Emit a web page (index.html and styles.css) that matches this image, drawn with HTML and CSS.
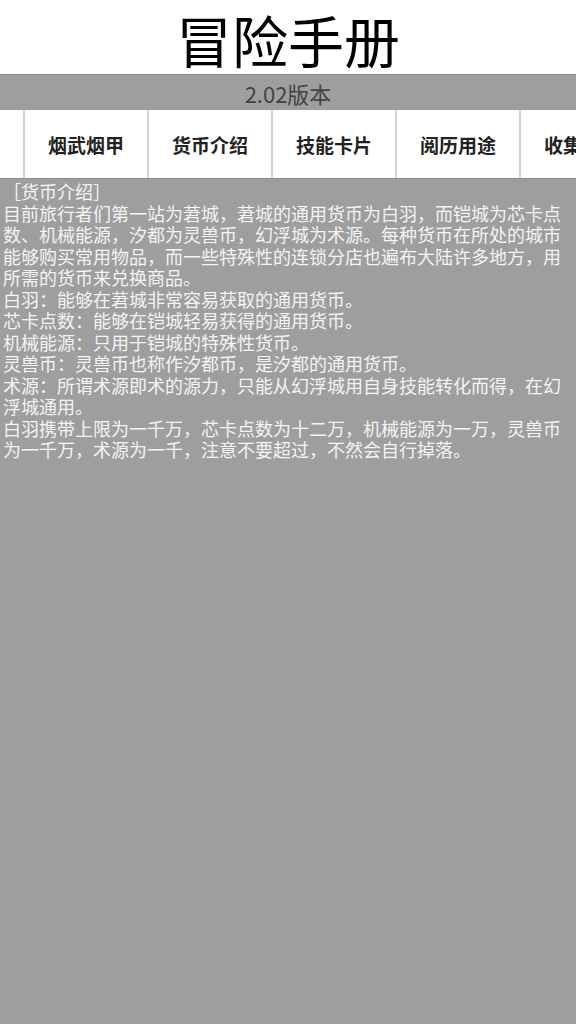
FILE: index.html
```html
<!DOCTYPE html>
<html lang="zh-CN">
<head>
<meta charset="utf-8">
<title>冒险手册</title>
<link rel="stylesheet" href="styles.css">
</head>
<body>
<div class="page">
  <header class="header">
    <h1 class="title">冒险手册</h1>
  </header>
  <div class="version">2.02版本</div>
  <nav class="tabs">
    <div class="tab-track">
      <div class="tab">人物介绍</div>
      <div class="tab">烟武烟甲</div>
      <div class="tab">货币介绍</div>
      <div class="tab">技能卡片</div>
      <div class="tab">阅历用途</div>
      <div class="tab">收集图鉴</div>
    </div>
  </nav>
  <main class="content">
    <p class="para">［货币介绍］</p>
    <p class="para">目前旅行者们第一站为莙城，莙城的通用货币为白羽，而铠城为芯卡点数、机械能源，汐都为灵兽币，幻浮城为术源。每种货币在所处的城市能够购买常用物品，而一些特殊性的连锁分店也遍布大陆许多地方，用所需的货币来兑换商品。</p>
    <p class="para">白羽：能够在莙城非常容易获取的通用货币。</p>
    <p class="para">芯卡点数：能够在铠城轻易获得的通用货币。</p>
    <p class="para">机械能源：只用于铠城的特殊性货币。</p>
    <p class="para">灵兽币：灵兽币也称作汐都币，是汐都的通用货币。</p>
    <p class="para">术源：所谓术源即术的源力，只能从幻浮城用自身技能转化而得，在幻浮城通用。</p>
    <p class="para">白羽携带上限为一千万，芯卡点数为十二万，机械能源为一万，灵兽币为一千万，术源为一千，注意不要超过，不然会自行掉落。</p>
  </main>
</div>
</body>
</html>
```

FILE: styles.css
```css
* {
  box-sizing: border-box;
}

html, body {
  margin: 0;
  padding: 0;
  height: 100%;
}

body {
  font-family: "Noto Sans CJK SC", "Noto Sans", sans-serif;
  background: #9e9e9e;
}

.page {
  display: flex;
  flex-direction: column;
  min-height: 1024px;
}

.header {
  height: 75px;
  background: #ffffff;
  border-bottom: 1px solid #8c8c8c;
  display: flex;
  align-items: center;
  justify-content: center;
}

.title {
  margin: 0;
  font-size: 56px;
  font-weight: 400;
  line-height: 70px;
  color: #000000;
  padding-top: 4px;
}

.version {
  height: 35px;
  background: #9e9e9e;
  color: #444444;
  font-size: 22px;
  line-height: 36px;
  text-align: center;
}

.tabs {
  height: 69px;
  background: #ffffff;
  overflow: hidden;
  border-bottom: 1px solid #8c8c8c;
}

.tab-track {
  display: flex;
  margin-left: -99px;
  height: 100%;
}

.tab {
  flex: 0 0 124px;
  height: 100%;
  border-right: 2px solid #d4d4d4;
  display: flex;
  align-items: center;
  justify-content: center;
  font-size: 19px;
  font-weight: 700;
  color: #222222;
}

.content {
  flex: 1;
  background: #9e9e9e;
  padding: 2px 0 0 3px;
  color: #f4f4f4;
  font-size: 18px;
  line-height: 21.5px;
}

.para {
  margin: 0;
}
```
